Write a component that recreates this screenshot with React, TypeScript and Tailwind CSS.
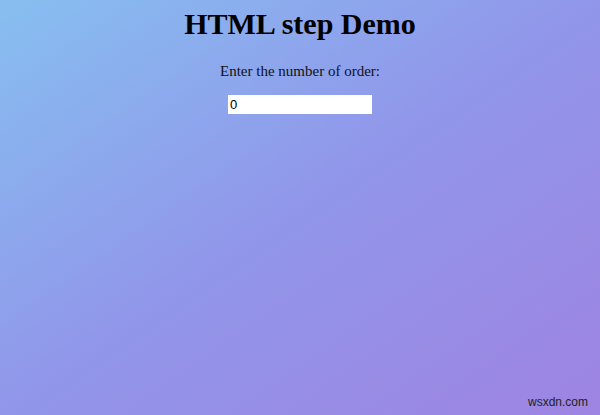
export default function App() {
  return (
    <div className="relative w-[600px] h-[415px] overflow-hidden bg-[linear-gradient(to_bottom_right,#87bff0,#9196ea_50%,#9e84e2)] font-['Liberation_Serif',serif] text-black">
      <div className="flex flex-col items-center">
        <h1 className="mt-[7px] text-[30px] leading-[34px] font-bold">HTML step Demo</h1>
        <p className="mt-[22px] text-[15px] leading-[17px] text-[#111]">Enter the number of order:</p>
        <input
          type="number"
          defaultValue={0}
          className="mt-[15px] w-[144px] h-[19px] bg-white px-[2px] text-[13px] font-['Liberation_Sans',sans-serif] outline-none [appearance:textfield]"
        />
      </div>
      <span className="absolute right-[12px] bottom-[4px] text-[12px] font-['Liberation_Sans',sans-serif] text-[#222]">wsxdn.com</span>
    </div>
  );
}
